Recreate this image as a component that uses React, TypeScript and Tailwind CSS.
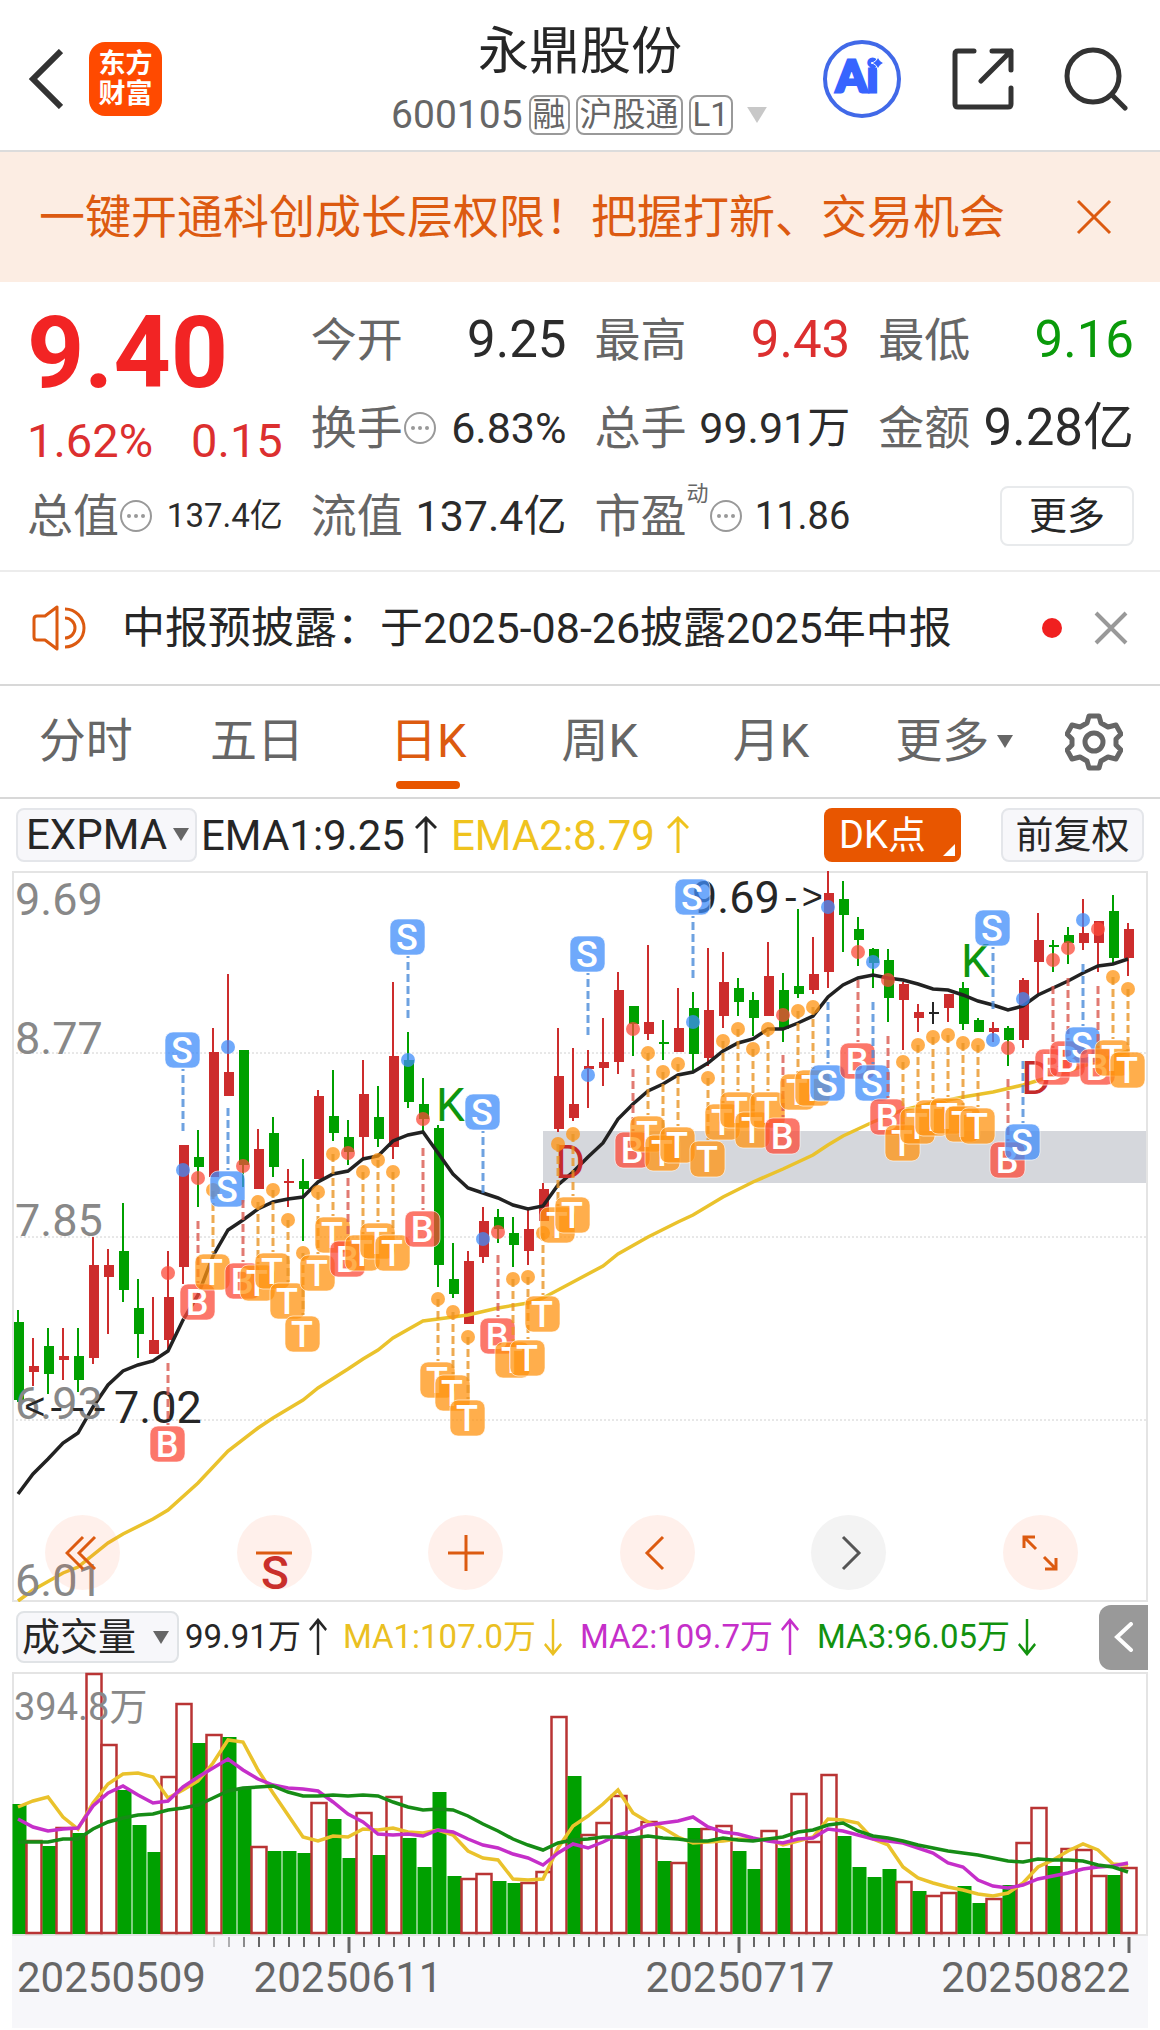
import React, { useState } from 'react'

type Candle = [color: 'r' | 'g' | 'k', high: number, top: number, bottom: number, low: number]
type Marker = [index: number, kind: 'S' | 'B' | 'T', dotY: number, badgeY: number]

const STEP = 15

const candles: Candle[] = [
  ['g', 439, 451, 529, 531], ['r', 467, 495, 501, 515], ['g', 457, 475, 503, 523], ['r', 457, 485, 489, 509],
  ['g', 457, 485, 509, 521], ['r', 366, 394, 487, 493], ['r', 378, 394, 406, 463], ['g', 332, 380, 419, 431],
  ['g', 408, 437, 463, 487], ['r', 426, 469, 483, 483], ['r', 380, 426, 469, 479], ['r', 274, 274, 396, 413],
  ['g', 259, 286, 296, 336], ['r', 157, 181, 306, 306], ['r', 103, 201, 225, 225], ['g', 179, 179, 294, 316],
  ['r', 258, 278, 318, 318], ['g', 246, 262, 296, 306], ['r', 298, 310, 312, 336], ['g', 288, 310, 318, 370],
  ['r', 219, 225, 308, 308], ['g', 199, 245, 262, 270], ['g', 249, 266, 281, 294], ['r', 189, 223, 266, 287],
  ['g', 215, 246, 268, 276], ['r', 111, 185, 276, 288], ['g', 161, 189, 231, 237], ['g', 207, 233, 248, 261],
  ['g', 254, 257, 394, 416], ['g', 372, 408, 423, 427], ['r', 380, 390, 453, 453], ['r', 336, 350, 386, 392],
  ['g', 338, 346, 358, 372], ['g', 346, 362, 374, 396], ['r', 339, 358, 380, 394], ['r', 312, 318, 350, 350],
  ['r', 157, 205, 258, 261], ['r', 177, 233, 247, 250], ['r', 179, 195, 198, 237], ['r', 147, 191, 197, 215],
  ['r', 101, 119, 191, 203], ['g', 135, 135, 153, 185], ['r', 74, 151, 163, 169], ['g', 149, 171, 173, 189],
  ['r', 117, 157, 181, 181], ['g', 121, 137, 183, 201], ['r', 77, 139, 187, 195], ['r', 81, 111, 145, 157],
  ['g', 107, 117, 131, 145], ['g', 121, 129, 147, 165], ['r', 71, 105, 145, 145], ['g', 102, 119, 158, 171],
  ['g', 38, 115, 123, 127], ['r', 66, 103, 119, 123], ['r', 0, 22, 101, 117], ['g', 10, 28, 44, 81],
  ['g', 46, 58, 69, 95], ['g', 77, 78, 92, 117], ['g', 78, 89, 127, 151], ['r', 111, 113, 129, 179],
  ['r', 133, 141, 147, 161], ['k', 131, 141, 143, 153], ['r', 123, 123, 137, 151], ['g', 111, 117, 153, 159],
  ['g', 147, 149, 161, 161], ['r', 151, 157, 161, 171], ['g', 155, 157, 169, 195], ['r', 107, 109, 169, 177],
  ['r', 42, 69, 91, 123], ['g', 69, 74, 76, 101], ['g', 56, 64, 72, 93], ['r', 28, 62, 72, 79],
  ['r', 50, 50, 72, 101], ['g', 24, 40, 87, 92], ['r', 52, 58, 87, 105],
]

const markers: Marker[] = [
  [10, 'B', 402, 573], [11, 'S', 299, 179], [12, 'B', 307, 431], [13, 'T', 319, 401], [14, 'S', 176, 318],
  [15, 'B', 295, 410], [16, 'T', 331, 412], [17, 'T', 319, 400], [18, 'T', 349, 430], [19, 'T', 382, 463],
  [20, 'T', 321, 402], [21, 'T', 283, 364], [22, 'B', 282, 388], [23, 'T', 301, 382], [24, 'T', 289, 370],
  [25, 'T', 301, 382], [26, 'S', 189, 66], [27, 'B', 248, 358], [28, 'T', 428, 509], [29, 'T', 441, 522],
  [30, 'T', 466, 547], [31, 'S', 368, 241], [32, 'B', 361, 465], [33, 'T', 408, 489], [34, 'T', 406, 487],
  [35, 'T', 362, 443], [36, 'T', 273, 354], [37, 'T', 263, 344], [38, 'S', 204, 83], [41, 'B', 158, 279],
  [42, 'T', 182, 263], [43, 'T', 201, 282], [44, 'T', 193, 274], [45, 'S', 151, 26], [46, 'T', 207, 288],
  [47, 'T', 170, 251], [48, 'T', 158, 239], [49, 'T', 178, 259], [50, 'T', 158, 239], [51, 'B', 144, 265],
  [52, 'T', 140, 221], [53, 'T', 136, 217], [54, 'S', 36, 212], [56, 'B', 81, 190], [57, 'S', 91, 212],
  [58, 'B', 109, 246], [59, 'T', 191, 272], [60, 'T', 174, 255], [61, 'T', 166, 247], [62, 'T', 164, 245],
  [63, 'T', 172, 253], [64, 'T', 174, 255], [65, 'S', 169, 57], [66, 'B', 177, 289], [67, 'S', 128, 271],
  [69, 'B', 89, 196], [70, 'B', 77, 188], [71, 'S', 49, 174], [72, 'B', 58, 196], [73, 'T', 106, 187],
  [74, 'T', 118, 199],
]

const ema1 = [
  623, 603, 588, 572, 562, 536, 514, 500, 494, 490, 480, 449, 424, 385, 359, 349, 338, 331, 328, 326,
  311, 303, 300, 288, 285, 270, 264, 261, 282, 303, 317, 322, 327, 334, 338, 335, 314, 301, 286, 272,
  248, 233, 220, 213, 204, 201, 192, 180, 172, 168, 158, 158, 152, 145, 126, 114, 107, 104, 107, 109,
  113, 118, 119, 124, 130, 134, 139, 135, 124, 117, 110, 102, 95, 93, 88,
]

const ema2: [number, number][] = [
  [0, 730], [1, 719], [3, 702], [4, 696], [6, 672], [7, 663], [9, 648], [10, 639], [12, 612], [14, 580],
  [16, 557], [17, 547], [19, 529], [20, 517], [22, 498], [23, 488], [24, 479], [25, 467], [27, 450], [29, 446],
  [30, 444], [32, 437], [34, 432], [35, 427], [36, 419], [37, 411], [39, 395], [40, 383], [42, 366], [44, 351],
  [45, 344], [47, 326], [49, 311], [51, 298], [53, 284], [54, 274], [55, 265], [57, 251], [59, 239], [61, 232],
  [63, 226], [65, 221], [67, 214], [69, 205], [71, 195], [74, 180],
]

const volumes = [
  130, 94, 88, 107, 101, 261, 190, 144, 109, 82, 158, 231, 191, 200, 197, 146, 88, 83, 83, 81,
  132, 115, 76, 122, 79, 138, 96, 67, 142, 58, 56, 61, 53, 51, 52, 63, 218, 158, 100, 112,
  139, 98, 113, 73, 72, 106, 106, 109, 83, 65, 104, 86, 141, 93, 160, 98, 67, 57, 65, 53,
  43, 39, 42, 48, 31, 36, 49, 92, 127, 68, 86, 85, 59, 59, 67,
]

// days that closed above the previous close, drawn hollow
const upDays = [
  1, 3, 5, 6, 10, 11, 13, 16, 20, 23, 25, 30, 31, 34, 35, 36, 38, 39, 40, 42, 44, 46, 47, 50,
  52, 53, 54, 59, 61, 62, 65, 67, 68, 70, 71, 72, 74,
]

const volMa1 = [
  135, 129, 125, 145, 157, 131, 112, 102, 101, 105, 126, 118, 109, 91, 68, 70, 98, 121, 143, 165,
  169, 164, 165, 157, 158, 156, 160, 161, 158, 163, 179, 186, 188, 207, 208, 207, 176, 154, 144, 132,
  118, 141, 150, 156, 165, 171, 170, 169, 167, 168, 167, 173, 169, 165, 147, 148, 151, 167, 173, 195,
  206, 211, 215, 218, 222, 224, 221, 211, 195, 188, 179, 172, 178, 192, 193,
]

const volMa2 = [
  147, 155, 159, 157, 156, 134, 121, 114, 123, 131, 129, 115, 105, 96, 87, 98, 107, 113, 116, 117,
  119, 130, 142, 150, 162, 163, 162, 164, 158, 160, 167, 173, 176, 182, 186, 193, 181, 172, 176, 170,
  163, 159, 153, 151, 149, 145, 155, 160, 162, 166, 169, 171, 167, 166, 157, 159, 163, 167, 169, 171,
  176, 181, 191, 195, 208, 214, 216, 213, 207, 204, 201, 197, 195, 194, 191,
]

const volMa3 = [
  170, 170, 170, 167, 167, 157, 150, 146, 143, 142, 138, 136, 133, 126, 119, 116, 115, 114, 120, 124,
  124, 123, 124, 123, 124, 130, 135, 138, 137, 138, 144, 152, 159, 167, 173, 178, 171, 168, 167, 165,
  165, 166, 164, 166, 167, 169, 169, 166, 168, 169, 167, 165, 160, 158, 153, 151, 159, 164, 166, 169,
  173, 176, 179, 181, 183, 186, 189, 190, 187, 188, 188, 189, 193, 195, 200,
]

const candleColor = { r: '#cd2d2d', g: '#00a000', k: '#262626' }
const badgeColor = { S: '#3f8cfa', B: '#fb4a38', T: '#ff9310' }
const dashColor = { S: '#4a8bd8', B: '#d9594f', T: '#e89526' }

const centerX = (i: number) => 6 + i * STEP
const toPoints = (values: number[]) => values.map((y, i) => `${centerX(i)},${y}`).join(' ')

const MarkerItem = ({ marker }: { marker: Marker }) => {
  const [index, kind, dotY, badgeY] = marker
  const x = centerX(index)
  // the badge hangs above its candle only for a part of the S marks
  const dir = badgeY < dotY ? -1 : 1
  return (
    <g>
      <circle cx={x} cy={dotY} r={7} fill={badgeColor[kind]} fillOpacity={0.75} />
      <line x1={x} x2={x} y1={badgeY - dir * 81} y2={badgeY - dir * 19} stroke={dashColor[kind]} strokeOpacity={0.8} strokeWidth={3} strokeDasharray="8 4" />
      <rect x={x - 18} y={badgeY - 18} width={35} height={36} rx={8} fill={badgeColor[kind]} fillOpacity={0.75} stroke="#fff" strokeOpacity={0.6} />
      <text x={x - 1} y={badgeY + 13} textAnchor="middle" fontSize={36} fontWeight={500} fill="#fff">{kind}</text>
    </g>
  )
}

const PriceChart = () => (
  <svg viewBox="0 0 1136 731" className="block w-full h-auto" role="img" aria-label="日K">
    <rect x={531} y={260} width={604} height={52} fill="#d5d7dc" />
    {[182, 366, 549].map((y) => (
      <line key={y} x1={0} x2={1135} y1={y} y2={y} stroke="#d0d0d0" strokeDasharray="2 2" />
    ))}
    <rect x={1} y={1} width={1134} height={729} fill="none" stroke="#e4e4e4" strokeWidth={2} />

    {candles.map(([color, high, top, bottom, low], i) => (
      <g key={i} fill={candleColor[color]}>
        <rect x={5 + i * STEP} y={high} width={2} height={low - high} />
        <rect x={2 + i * STEP} y={top} width={10} height={Math.max(bottom - top, 2)} />
      </g>
    ))}

    <polyline points={ema2.map(([i, y]) => `${centerX(i)},${y}`).join(' ')} fill="none" stroke="#eac22c" strokeWidth={3.5} />
    <polyline points={toPoints(ema1)} fill="none" stroke="#222" strokeWidth={3.5} />

    <g fontSize={45} fill="#888">
      <text x={3} y={44}>9.69</text>
      <text x={3} y={183}>8.77</text>
      <text x={3} y={365}>7.85</text>
      <text x={3} y={548}>6.93</text>
      <text x={3} y={725}>6.01</text>
    </g>
    <g fontSize={45} fill="#262626">
      <text x={102} y={552}>7.02</text>
      <text x={680} y={42}>9.69</text>
    </g>
    <g className="font-['Liberation_Mono']" fontSize={36} fill="#262626">
      <text x={12} y={548}>&lt;---</text>
      <text x={768} y={38}>-&gt;</text>
    </g>
    <g fontSize={46}>
      <text x={424} y={250} fill="#0e960e">K</text>
      <text x={949} y={106} fill="#0e960e">K</text>
      <text x={543} y={307} fill="#c42b2b">D</text>
      <text x={1009} y={223} fill="#c42b2b">D</text>
      <text x={249} y={718} fill="#c42b2b" fontWeight={500}>S</text>
    </g>

    {markers.map((m) => <MarkerItem key={m[0]} marker={m} />)}
  </svg>
)

const VolumeChart = () => (
  <svg viewBox="0 0 1136 264" className="block w-full h-auto" role="img" aria-label="成交量">
    <rect x={1} y={1} width={1134} height={262} fill="none" stroke="#e4e4e4" strokeWidth={2} />
    {volumes.map((h, i) => upDays.includes(i)
      ? <rect key={i} x={-0.5 + i * STEP} y={263 - h} width={15} height={h - 2} fill="#fff" stroke="#b93434" strokeWidth={2.5} />
      : <rect key={i} x={0.5 + i * STEP} y={262 - h} width={14} height={h} fill="#00a000" />
    )}
    <g fill="none" strokeWidth={3.5}>
      <polyline points={toPoints(volMa1)} stroke="#eac22c" />
      <polyline points={toPoints(volMa2)} stroke="#c52fc9" />
      <polyline points={toPoints(volMa3)} stroke="#168c16" />
    </g>
    <text x={2} y={48} fontSize={38} fill="#888">394.8万</text>
  </svg>
)

const DateAxis = () => (
  <svg viewBox="0 0 1136 92" className="block w-full h-auto bg-[#f7f7fa]">
    {candles.map((_, i) => {
      if (i < 13) return null
      const major = i === 22 || i === 48 || i === 74
      return (
        <line key={i} x1={7 + i * STEP} x2={7 + i * STEP} y1={1} y2={major ? 17 : 11}
          stroke="#666" strokeWidth={major ? 3 : 2} strokeOpacity={Math.min(1, (i - 12) * 0.25)} />
      )
    })}
    <g fontSize={42} fill="#666">
      <text x={5} y={56}>20250509</text>
      <text x={336} y={56} textAnchor="middle">20250611</text>
      <text x={728} y={56} textAnchor="middle">20250717</text>
      <text x={1118} y={56} textAnchor="end">20250822</text>
    </g>
  </svg>
)

const Arrow = ({ down, narrow }: { down?: boolean, narrow?: boolean }) => (
  <svg viewBox="0 0 22 38" className={`${narrow ? 'w-[18px]' : 'w-[22px]'} h-[38px] shrink-0 ${down ? 'rotate-180' : ''}`} preserveAspectRatio="none" fill="none" stroke="currentColor" strokeWidth={3}>
    <path d="M11 37V2M1 12L11 2l10 10" />
  </svg>
)

const Triangle = ({ className }: { className: string }) => (
  <svg viewBox="0 0 16 13" className={className} fill="currentColor"><path d="M0 0h16L8 13z" /></svg>
)

const MoreDots = () => (
  <svg viewBox="0 0 34 34" className="w-[34px] h-[34px] shrink-0" fill="none" stroke="#999" strokeWidth={2}>
    <circle cx={17} cy={17} r={15} />
    <g fill="#999" stroke="none"><circle cx={10} cy={17} r={2} /><circle cx={17} cy={17} r={2} /><circle cx={24} cy={17} r={2} /></g>
  </svg>
)

const Header = () => (
  <header className="grid grid-cols-[1fr_auto_1fr] items-center h-[152px] border-b-2 border-[#dcdcdc]">
    <div className="flex items-center gap-[26px] pl-7 pt-2">
      <button aria-label="返回">
        <svg viewBox="0 0 35 60" className="w-[35px] h-[60px]" fill="none" stroke="#333" strokeWidth={6}><path d="M33 2L5 30l28 28" /></svg>
      </button>
      <a href="#" className="flex flex-col items-center justify-center w-[73px] h-[74px] rounded-2xl bg-[#ff4a00] text-white text-[27px] leading-[30px] font-bold">
        <span>东方</span>
        <span>财富</span>
      </a>
    </div>
    <div className="flex flex-col items-center pt-2.5">
      <h1 className="text-[51px] leading-[70px] text-[#262626]">永鼎股份</h1>
      <div className="flex items-center gap-1.5 h-14 text-[#666] text-[33px]">
        <span className="text-[39px]">600105</span>
        <span className="flex items-center h-[40px] px-0.5 border-2 border-[#999] rounded-lg">融</span>
        <span className="flex items-center h-[40px] px-0.5 border-2 border-[#999] rounded-lg">沪股通</span>
        <span className="flex items-center h-[40px] px-0.5 border-2 border-[#999] rounded-lg">L1</span>
        <Triangle className="w-6 h-4 ml-1.5 text-[#c8c8c8]" />
      </div>
    </div>
    <div className="flex items-center justify-end gap-[50px] pr-8 pt-2">
      <button aria-label="Ai">
        <svg viewBox="0 0 80 80" className="w-[80px] h-[80px]">
          <circle cx={40} cy={40} r={37} fill="none" stroke="#4169e8" strokeWidth={4} />
          <text x={14} y={53} fontSize={44} fontWeight={900} fill="#3764ff" stroke="#3764ff" strokeWidth={3} className="font-['Lato']">Ai</text>
          <path d="M56 17q1 6 7 7q-6 1-7 7q-1-6-7-7q6-1 7-7z" fill="#3764ff" stroke="#fff" strokeWidth={1} />
        </svg>
      </button>
      <button aria-label="分享">
        <svg viewBox="0 0 62 62" className="w-[62px] h-[62px]" fill="none" stroke="#333" strokeWidth={5} strokeLinecap="round" strokeLinejoin="round">
          <path d="M22 3H6q-3 0-3 3v50q0 3 3 3h50q3 0 3-3V40" />
          <path d="M40 3h19v19M59 3L29 33" />
        </svg>
      </button>
      <button aria-label="搜索">
        <svg viewBox="0 0 64 64" className="w-[64px] h-[64px]" fill="none" stroke="#333" strokeWidth={5} strokeLinecap="round">
          <circle cx={29} cy={29} r={26} />
          <path d="M49 49l12 12" />
        </svg>
      </button>
    </div>
  </header>
)

const Quote = ({ label, value, size, color = 'text-[#2b2b2b]', dots, sup }: { label: string, value: string, size: string, color?: string, dots?: boolean, sup?: string }) => (
  <div className="flex items-center h-[88px] whitespace-nowrap">
    <dt className="flex items-center text-[46px] text-[#666]">
      {label}
      {sup && <sup className="self-start text-[22px] leading-6 top-0">{sup}</sup>}
      {dots && <MoreDots />}
    </dt>
    <dd className={`ml-auto ${size} ${color}`}>{value}</dd>
  </div>
)

const tabs = ['分时', '五日', '日K', '周K', '月K']

const App = () => {
  const [activeTab, setActiveTab] = useState('日K')
  const [showBanner, setShowBanner] = useState(true)
  const [showNews, setShowNews] = useState(true)

  return (
    <div className="w-full bg-white pb-0.5 font-[Roboto,'Noto_Sans_CJK_SC',sans-serif] text-[#262626]">
      <Header />

      {showBanner && (
        <div className="flex items-center justify-between h-[130px] pl-[39px] pr-12 bg-[#fcede3] text-[#dc5a10]">
          <p className="text-[46px] whitespace-nowrap">一键开通科创成长层权限！把握打新、交易机会</p>
          <button aria-label="关闭" onClick={() => setShowBanner(false)}>
            <svg viewBox="0 0 36 36" className="w-9 h-9" fill="none" stroke="currentColor" strokeWidth={3}><path d="M2 2l32 32M34 2L2 34" /></svg>
          </button>
        </div>
      )}

      <section className="grid grid-cols-4 gap-x-7 pl-[27px] pr-[26px] pt-3.5 pb-2.5 border-b-2 border-[#ececec]">
        <div className="row-span-2">
          <p className="text-[100px] leading-[114px] font-bold text-[#f22424]">9.40</p>
          <p className="flex justify-between text-[47px] leading-[62px] text-[#dc2f2f]">
            <span>1.62%</span>
            <span>0.15</span>
          </p>
        </div>
        <dl className="contents">
          <Quote label="今开" value="9.25" size="text-[51px]" />
          <Quote label="最高" value="9.43" size="text-[51px]" color="text-[#dc2f2f]" />
          <Quote label="最低" value="9.16" size="text-[51px]" color="text-[#0a9a0a]" />
          <Quote label="换手" value="6.83%" size="text-[43px]" dots />
          <Quote label="总手" value="99.91万" size="text-[43px]" />
          <Quote label="金额" value="9.28亿" size="text-[51px]" />
          <Quote label="总值" value="137.4亿" size="text-[33px]" dots />
          <Quote label="流值" value="137.4亿" size="text-[43px]" />
          <Quote label="市盈" value="11.86" size="text-[38px]" dots sup="动" />
        </dl>
        <div className="flex items-center justify-end">
          <button className="w-[134px] h-[60px] border-2 border-[#e8eaec] rounded-lg text-[38px] leading-none">更多</button>
        </div>
      </section>

      {showNews && (
        <div className="flex items-center h-[114px] pl-8 pr-8 border-b-2 border-[#d8d8d8]">
          <svg viewBox="0 0 56 48" className="w-14 h-12 shrink-0" fill="none" stroke="#dc5a10" strokeWidth={3} strokeLinejoin="round">
            <path d="M25 3v42L13 36H5q-3 0-3-3V15q0-3 3-3h8z" />
            <path d="M33 14a10 10 0 0 1 0 20M33 5a19 19 0 0 1 0 38" />
          </svg>
          <p className="ml-[34px] text-[43px] whitespace-nowrap">中报预披露：于2025-08-26披露2025年中报</p>
          <span className="ml-auto w-5 h-5 rounded-full bg-[#f02020]" />
          <button aria-label="关闭" className="ml-8" onClick={() => setShowNews(false)}>
            <svg viewBox="0 0 34 34" className="w-[34px] h-[34px]" fill="none" stroke="#999" strokeWidth={4}><path d="M2 2l30 30M32 2L2 32" /></svg>
          </button>
        </div>
      )}

      <nav className="flex h-[113px] border-b-2 border-[#d8d8d8] text-[47px] text-[#666]">
        {tabs.map((tab) => (
          <button key={tab} onClick={() => setActiveTab(tab)}
            className={`relative flex-1 ${activeTab === tab ? 'text-[#dc5a10]' : ''}`}>
            {tab}
            {activeTab === tab && <span className="absolute bottom-2 left-1/2 -translate-x-1/2 w-16 h-2 rounded-full bg-[#e85600]" />}
          </button>
        ))}
        <button className="flex-1">
          <span className="flex items-center justify-center gap-2 pl-6 whitespace-nowrap">
            更多
            <Triangle className="w-4 h-[13px]" />
          </span>
        </button>
        <button aria-label="设置" className="flex items-center justify-center w-[132px]">
          <svg viewBox="0 0 58 58" className="w-[58px] h-[58px]" fill="none" stroke="#666" strokeWidth={5} strokeLinejoin="round">
            <path d="M24 3h10l2 7 7 4 8-2 5 9-5 5v6l5 5-5 9-8-2-7 4-2 7H24l-2-7-7-4-8 2-5-9 5-5v-6l-5-5 5-9 8 2 7-4z" />
            <circle cx={29} cy={29} r={9} />
          </svg>
        </button>
      </nav>

      <div className="flex items-center h-[72px] pl-4 pr-4 text-[42px] whitespace-nowrap">
        <div className="relative">
          <select aria-label="主图指标" className="block appearance-none w-[181px] h-[54px] pl-2 border-2 border-[#e4e6ea] rounded-lg bg-[#f7f7fa] leading-none">
            <option>EXPMA</option>
          </select>
          <Triangle className="absolute right-2 top-5 w-4 h-[13px] text-[#666] pointer-events-none" />
        </div>
        <span className="ml-1">EMA1:9.25</span>
        <span className="ml-2.5"><Arrow /></span>
        <span className="flex items-center gap-3 ml-3.5 text-[#efc31e]">EMA2:8.79<Arrow /></span>
        <button className="relative ml-auto w-[137px] h-[54px] pr-5 rounded-lg bg-[#e85600] text-white text-[38px] leading-none">
          DK点
          <svg viewBox="0 0 12 12" className="absolute right-1.5 bottom-1.5 w-3 h-3" fill="#fff"><path d="M12 0v12H0z" /></svg>
        </button>
        <button className="ml-10 w-[143px] h-[54px] border-2 border-[#e4e6ea] rounded-lg bg-[#f7f7fa] text-[38px] leading-none">前复权</button>
      </div>

      <div className="relative mx-3">
        <PriceChart />
        <div className="absolute left-[33px] right-[70px] bottom-3 flex justify-between text-[#dc5a10]">
          <button aria-label="最早" className="flex items-center justify-center w-[75px] h-[75px] rounded-full bg-[#ff5a1e]/9">
            <svg viewBox="0 0 36 36" className="w-9 h-9" fill="none" stroke="currentColor" strokeWidth={3}><path d="M18 2L2 18l16 16M30 2L14 18l16 16" /></svg>
          </button>
          <button aria-label="缩小" className="flex items-center justify-center w-[75px] h-[75px] rounded-full bg-[#ff5a1e]/9">
            <svg viewBox="0 0 36 36" className="w-9 h-9" fill="none" stroke="currentColor" strokeWidth={3}><path d="M0 18h36" /></svg>
          </button>
          <button aria-label="放大" className="flex items-center justify-center w-[75px] h-[75px] rounded-full bg-[#ff5a1e]/9">
            <svg viewBox="0 0 36 36" className="w-9 h-9" fill="none" stroke="currentColor" strokeWidth={3}><path d="M0 18h36M18 0v36" /></svg>
          </button>
          <button aria-label="向左" className="flex items-center justify-center w-[75px] h-[75px] rounded-full bg-[#ff5a1e]/9">
            <svg viewBox="0 0 36 36" className="w-9 h-9" fill="none" stroke="currentColor" strokeWidth={3}><path d="M24 2L8 18l16 16" /></svg>
          </button>
          <button aria-label="向右" className="flex items-center justify-center w-[75px] h-[75px] rounded-full bg-[#f3f3f3] text-[#555]">
            <svg viewBox="0 0 36 36" className="w-9 h-9" fill="none" stroke="currentColor" strokeWidth={3}><path d="M12 2l16 16-16 16" /></svg>
          </button>
          <button aria-label="全屏" className="flex items-center justify-center w-[75px] h-[75px] rounded-full bg-[#ff5a1e]/9">
            <svg viewBox="0 0 36 36" className="w-9 h-9" fill="none" stroke="currentColor" strokeWidth={3}><path d="M2 13V2h11M2 2l12 12M34 23v11H23M34 34L22 22" /></svg>
          </button>
        </div>
      </div>

      <div className="flex items-center h-[70px] ml-4 mr-3 text-[33px] whitespace-nowrap">
        <div className="relative">
          <select aria-label="副图指标" className="block appearance-none w-[163px] h-[52px] pl-1 border-2 border-[#e0e3e6] rounded-lg bg-[#f7f7fa] text-[38px] leading-none">
            <option>成交量</option>
          </select>
          <Triangle className="absolute right-2.5 top-5 w-4 h-[13px] text-[#666] pointer-events-none" />
        </div>
        <span className="flex items-center gap-2 ml-1.5">99.91万<Arrow narrow /></span>
        <span className="flex items-center gap-2 ml-4 text-[#eac022]">MA1:107.0万<Arrow narrow down /></span>
        <span className="flex items-center gap-2 ml-[18px] text-[#c52fc9]">MA2:109.7万<Arrow narrow /></span>
        <span className="flex items-center gap-2 ml-[18px] text-[#12920f]">MA3:96.05万<Arrow narrow down /></span>
        <button aria-label="展开" className="flex items-center justify-center ml-auto w-[49px] h-[65px] rounded-l-xl bg-[#999]">
          <svg viewBox="0 0 20 30" className="w-5 h-[30px]" fill="none" stroke="#fff" strokeWidth={4} strokeLinecap="round"><path d="M17 2L3 15l14 13" /></svg>
        </button>
      </div>

      <div className="mx-3">
        <VolumeChart />
        <DateAxis />
      </div>
    </div>
  )
}

export default App
